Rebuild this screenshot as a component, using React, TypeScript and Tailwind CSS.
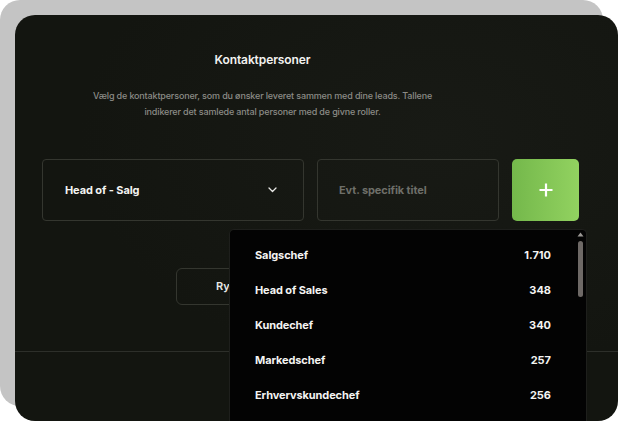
import React from "react";

const items = [
  { label: "Salgschef", count: "1.710" },
  { label: "Head of Sales", count: "348" },
  { label: "Kundechef", count: "340" },
  { label: "Markedschef", count: "257" },
  { label: "Erhvervskundechef", count: "256" },
];

export default function App() {
  return (
    <div
      className="w-[618px] h-[421px] overflow-hidden bg-white"
      style={{ fontFamily: "Inter, 'Open Sans', sans-serif" }}
    >
      <div className="relative ml-[15px] mt-[15px] w-[603px] h-[406px] rounded-[20px] bg-[#131510] shadow-[-15px_-15px_0_0_#c4c4c4] bg-[radial-gradient(ellipse_at_70%_30%,#181a15_0%,#131510_60%)]">
        <div className="flex flex-col">
          {/* text block */}
          <div className="ml-[27px] w-[441px] flex flex-col items-center pt-[36px]">
            <h1 className="text-[12px] font-semibold text-[#f2f2f0] leading-[18px] tracking-[-0.1px]">
              Kontaktpersoner
            </h1>
            <p className="mt-[19px] text-center text-[9px] leading-[16px] font-medium text-[#8b8b86] tracking-[-0.15px]">
              Vælg de kontaktpersoner, som du ønsker leveret sammen med dine leads. Tallene
              <br />
              indikerer det samlede antal personer med de givne roller.
            </p>
          </div>

          {/* input row */}
          <div className="mt-[39px] ml-[27px] flex gap-[13px]">
            <div className="w-[262px] h-[62px] rounded-[4px] border border-[#34362f] flex items-center justify-between pl-[22px] pr-[26px]">
              <span className="text-[11px] font-bold text-[#f4f4f2] tracking-[-0.1px]">Head of - Salg</span>
              <svg width="9" height="6" viewBox="0 0 9 6" fill="none">
                <path d="M1 1l3.5 3.5L8 1" stroke="#e8e8e6" strokeWidth="1.3" strokeLinecap="round" strokeLinejoin="round" />
              </svg>
            </div>
            <div className="w-[182px] h-[62px] rounded-[4px] border border-[#34362f] flex items-center pl-[21px]">
              <span className="text-[11px] font-bold text-[#6e6f69] tracking-[-0.1px]">Evt. specifik titel</span>
            </div>
            <button className="w-[67px] h-[62px] rounded-[5px] bg-gradient-to-r from-[#74b84b] to-[#92d260] flex items-center justify-center">
              <svg width="14" height="14" viewBox="0 0 14 14" fill="none">
                <path d="M7 0.5v13M0.5 7h13" stroke="#ffffff" strokeWidth="2.2" />
              </svg>
            </button>
          </div>

          {/* clear button */}
          <div className="mt-[47px] ml-[161px]">
            <button className="w-[281px] h-[37px] rounded-[6px] border border-[#34362f] flex items-center pl-[39px]">
              <span className="text-[11px] font-semibold text-[#e8e8e6]">Ryd alle</span>
            </button>
          </div>

          {/* divider */}
          <div className="mt-[46px] h-px bg-[#2d2f2a]" />
        </div>

        {/* dropdown */}
        <div className="absolute left-[214px] top-[214px] w-[358px] h-[192px] rounded-t-[5px] border border-b-0 border-[#1e1f1c] bg-[#030303] overflow-hidden">
          <div className="pt-[8px] pl-[25px] pr-[35px] flex flex-col">
            {items.map((it) => (
              <div key={it.label} className="h-[35px] flex items-center justify-between">
                <span className="text-[11px] font-bold text-[#f4f4f2] tracking-[-0.1px]">{it.label}</span>
                <span className="text-[11px] font-bold text-[#f4f4f2]">{it.count}</span>
              </div>
            ))}
          </div>
          {/* scrollbar */}
          <div className="absolute right-[2px] top-[2px] w-[8px] flex flex-col items-center">
            <svg width="7" height="5" viewBox="0 0 7 5">
              <path d="M3.5 0.5L6.5 4.5H0.5Z" fill="#9a9794" />
            </svg>
            <div className="mt-[4px] w-[5px] h-[56px] rounded-full bg-[#6e6966]" />
          </div>
        </div>
      </div>
    </div>
  );
}
